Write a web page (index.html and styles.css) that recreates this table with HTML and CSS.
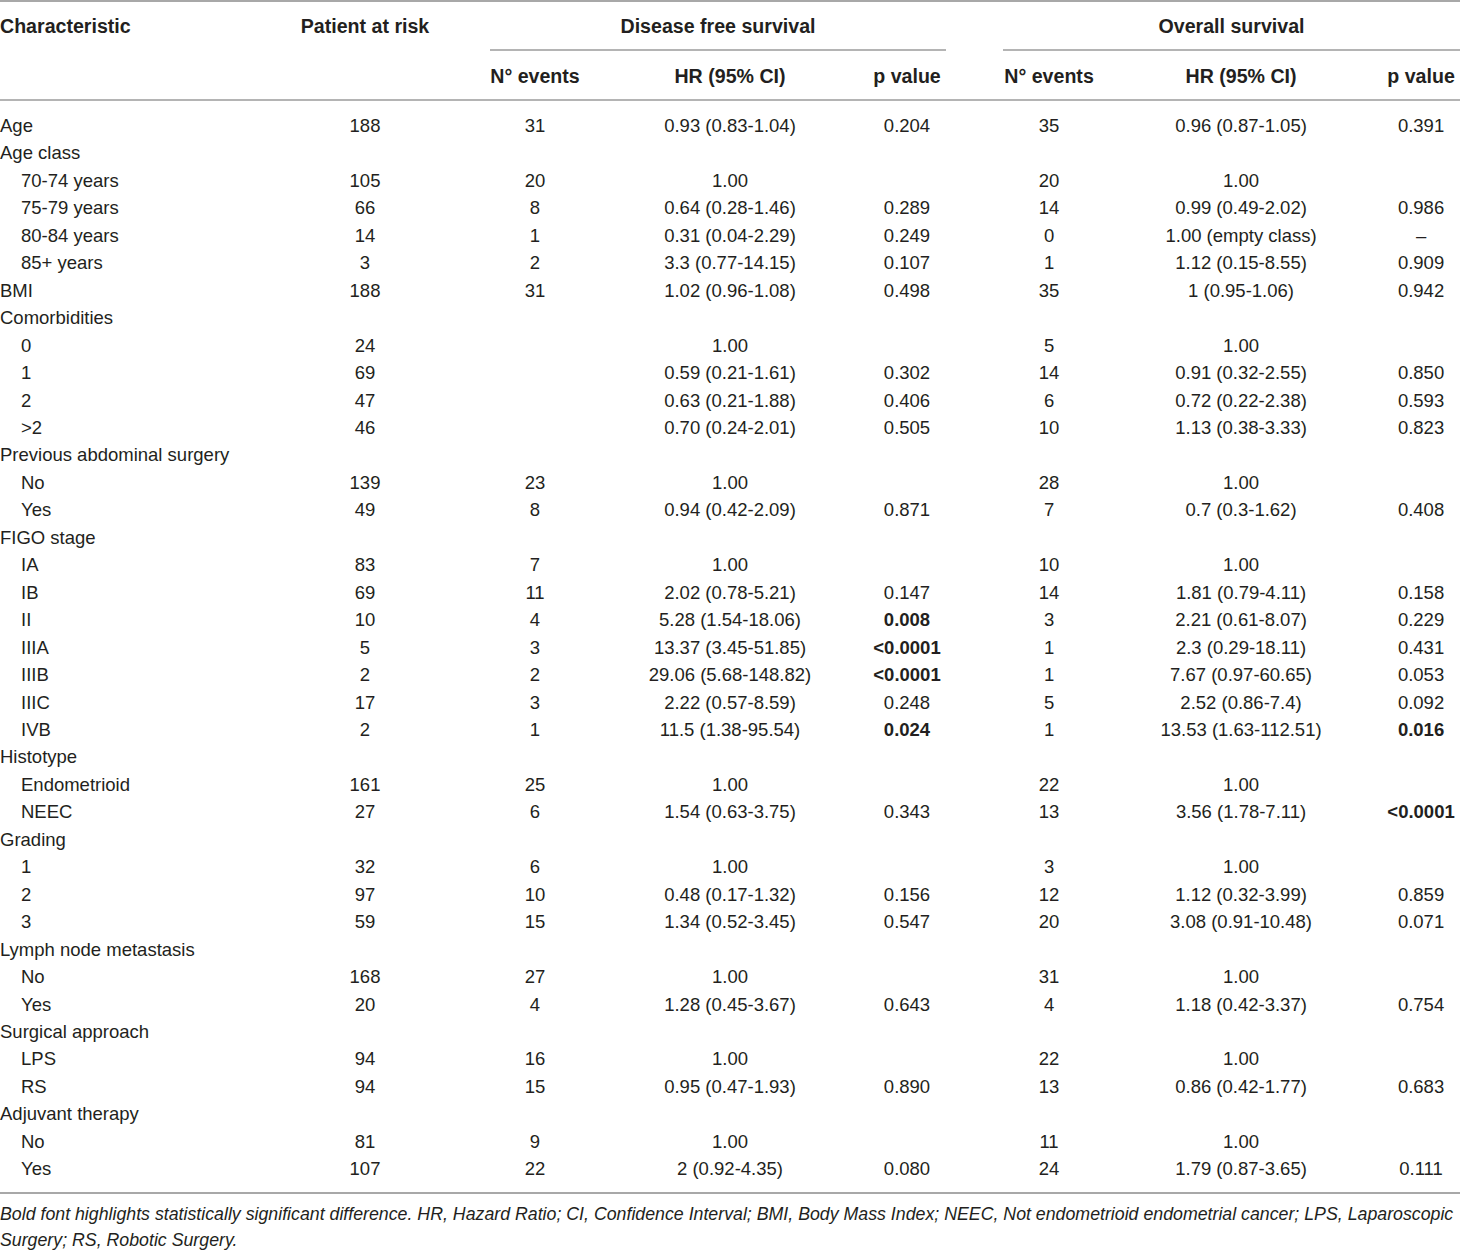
FILE: index.html
```html
<!DOCTYPE html>
<html lang="en">
<head>
<meta charset="utf-8">
<title>Cox regression table</title>
<link rel="stylesheet" href="styles.css">
</head>
<body>
<div class="wrap">
<table class="stats">
<colgroup>
<col class="w1"><col class="w2"><col class="w3"><col class="w4"><col class="w5"><col class="w6"><col class="w7"><col class="w8">
</colgroup>
<thead>
<tr class="h1">
<th class="lab">Characteristic</th>
<th>Patient at risk</th>
<th colspan="3" class="grp"><div class="grp-dfs">Disease free survival</div></th>
<th colspan="3" class="grp"><div class="grp-os">Overall survival</div></th>
</tr>
<tr class="h2">
<th></th>
<th></th>
<th>N° events</th>
<th>HR (95% CI)</th>
<th>p value</th>
<th>N° events</th>
<th>HR (95% CI)</th>
<th>p value</th>
</tr>
</thead>
<tbody>
<tr class="first"><td>Age</td><td>188</td><td>31</td><td>0.93 (0.83-1.04)</td><td>0.204</td><td>35</td><td>0.96 (0.87-1.05)</td><td>0.391</td></tr>
<tr><td>Age class</td><td></td><td></td><td></td><td></td><td></td><td></td><td></td></tr>
<tr><td class="sub">70-74 years</td><td>105</td><td>20</td><td>1.00</td><td></td><td>20</td><td>1.00</td><td></td></tr>
<tr><td class="sub">75-79 years</td><td>66</td><td>8</td><td>0.64 (0.28-1.46)</td><td>0.289</td><td>14</td><td>0.99 (0.49-2.02)</td><td>0.986</td></tr>
<tr><td class="sub">80-84 years</td><td>14</td><td>1</td><td>0.31 (0.04-2.29)</td><td>0.249</td><td>0</td><td>1.00 (empty class)</td><td>–</td></tr>
<tr><td class="sub">85+ years</td><td>3</td><td>2</td><td>3.3 (0.77-14.15)</td><td>0.107</td><td>1</td><td>1.12 (0.15-8.55)</td><td>0.909</td></tr>
<tr><td>BMI</td><td>188</td><td>31</td><td>1.02 (0.96-1.08)</td><td>0.498</td><td>35</td><td>1 (0.95-1.06)</td><td>0.942</td></tr>
<tr><td>Comorbidities</td><td></td><td></td><td></td><td></td><td></td><td></td><td></td></tr>
<tr><td class="sub">0</td><td>24</td><td></td><td>1.00</td><td></td><td>5</td><td>1.00</td><td></td></tr>
<tr><td class="sub">1</td><td>69</td><td></td><td>0.59 (0.21-1.61)</td><td>0.302</td><td>14</td><td>0.91 (0.32-2.55)</td><td>0.850</td></tr>
<tr><td class="sub">2</td><td>47</td><td></td><td>0.63 (0.21-1.88)</td><td>0.406</td><td>6</td><td>0.72 (0.22-2.38)</td><td>0.593</td></tr>
<tr><td class="sub">&gt;2</td><td>46</td><td></td><td>0.70 (0.24-2.01)</td><td>0.505</td><td>10</td><td>1.13 (0.38-3.33)</td><td>0.823</td></tr>
<tr><td>Previous abdominal surgery</td><td></td><td></td><td></td><td></td><td></td><td></td><td></td></tr>
<tr><td class="sub">No</td><td>139</td><td>23</td><td>1.00</td><td></td><td>28</td><td>1.00</td><td></td></tr>
<tr><td class="sub">Yes</td><td>49</td><td>8</td><td>0.94 (0.42-2.09)</td><td>0.871</td><td>7</td><td>0.7 (0.3-1.62)</td><td>0.408</td></tr>
<tr><td>FIGO stage</td><td></td><td></td><td></td><td></td><td></td><td></td><td></td></tr>
<tr><td class="sub">IA</td><td>83</td><td>7</td><td>1.00</td><td></td><td>10</td><td>1.00</td><td></td></tr>
<tr><td class="sub">IB</td><td>69</td><td>11</td><td>2.02 (0.78-5.21)</td><td>0.147</td><td>14</td><td>1.81 (0.79-4.11)</td><td>0.158</td></tr>
<tr><td class="sub">II</td><td>10</td><td>4</td><td>5.28 (1.54-18.06)</td><td class="sig">0.008</td><td>3</td><td>2.21 (0.61-8.07)</td><td>0.229</td></tr>
<tr><td class="sub">IIIA</td><td>5</td><td>3</td><td>13.37 (3.45-51.85)</td><td class="sig">&lt;0.0001</td><td>1</td><td>2.3 (0.29-18.11)</td><td>0.431</td></tr>
<tr><td class="sub">IIIB</td><td>2</td><td>2</td><td>29.06 (5.68-148.82)</td><td class="sig">&lt;0.0001</td><td>1</td><td>7.67 (0.97-60.65)</td><td>0.053</td></tr>
<tr><td class="sub">IIIC</td><td>17</td><td>3</td><td>2.22 (0.57-8.59)</td><td>0.248</td><td>5</td><td>2.52 (0.86-7.4)</td><td>0.092</td></tr>
<tr><td class="sub">IVB</td><td>2</td><td>1</td><td>11.5 (1.38-95.54)</td><td class="sig">0.024</td><td>1</td><td>13.53 (1.63-112.51)</td><td class="sig">0.016</td></tr>
<tr><td>Histotype</td><td></td><td></td><td></td><td></td><td></td><td></td><td></td></tr>
<tr><td class="sub">Endometrioid</td><td>161</td><td>25</td><td>1.00</td><td></td><td>22</td><td>1.00</td><td></td></tr>
<tr><td class="sub">NEEC</td><td>27</td><td>6</td><td>1.54 (0.63-3.75)</td><td>0.343</td><td>13</td><td>3.56 (1.78-7.11)</td><td class="sig">&lt;0.0001</td></tr>
<tr><td>Grading</td><td></td><td></td><td></td><td></td><td></td><td></td><td></td></tr>
<tr><td class="sub">1</td><td>32</td><td>6</td><td>1.00</td><td></td><td>3</td><td>1.00</td><td></td></tr>
<tr><td class="sub">2</td><td>97</td><td>10</td><td>0.48 (0.17-1.32)</td><td>0.156</td><td>12</td><td>1.12 (0.32-3.99)</td><td>0.859</td></tr>
<tr><td class="sub">3</td><td>59</td><td>15</td><td>1.34 (0.52-3.45)</td><td>0.547</td><td>20</td><td>3.08 (0.91-10.48)</td><td>0.071</td></tr>
<tr><td>Lymph node metastasis</td><td></td><td></td><td></td><td></td><td></td><td></td><td></td></tr>
<tr><td class="sub">No</td><td>168</td><td>27</td><td>1.00</td><td></td><td>31</td><td>1.00</td><td></td></tr>
<tr><td class="sub">Yes</td><td>20</td><td>4</td><td>1.28 (0.45-3.67)</td><td>0.643</td><td>4</td><td>1.18 (0.42-3.37)</td><td>0.754</td></tr>
<tr><td>Surgical approach</td><td></td><td></td><td></td><td></td><td></td><td></td><td></td></tr>
<tr><td class="sub">LPS</td><td>94</td><td>16</td><td>1.00</td><td></td><td>22</td><td>1.00</td><td></td></tr>
<tr><td class="sub">RS</td><td>94</td><td>15</td><td>0.95 (0.47-1.93)</td><td>0.890</td><td>13</td><td>0.86 (0.42-1.77)</td><td>0.683</td></tr>
<tr><td>Adjuvant therapy</td><td></td><td></td><td></td><td></td><td></td><td></td><td></td></tr>
<tr><td class="sub">No</td><td>81</td><td>9</td><td>1.00</td><td></td><td>11</td><td>1.00</td><td></td></tr>
<tr class="last"><td class="sub">Yes</td><td>107</td><td>22</td><td>2 (0.92-4.35)</td><td>0.080</td><td>24</td><td>1.79 (0.87-3.65)</td><td>0.111</td></tr>
</tbody>
</table>
<p class="note">Bold font highlights statistically significant difference. HR, Hazard Ratio; CI, Confidence Interval; BMI, Body Mass Index; NEEC, Not endometrioid endometrial cancer; LPS, Laparoscopic Surgery; RS, Robotic Surgery.</p>
</div>
</body>
</html>
```

FILE: styles.css
```css
html, body {
  margin: 0;
  padding: 0;
  background: #ffffff;
}

body {
  font-family: "Liberation Sans", Arial, Helvetica, sans-serif;
  color: #231f20;
}

.wrap {
  width: 1460px;
}

.stats {
  width: 1460px;
  table-layout: fixed;
  border-collapse: collapse;
  border-top: 2px solid #a8a8a8;
  border-bottom: 2px solid #a8a8a8;
}

.w1 { width: 270px; }
.w2 { width: 190px; }
.w3 { width: 150px; }
.w4 { width: 240px; }
.w5 { width: 114px; }
.w6 { width: 170px; }
.w7 { width: 214px; }
.w8 { width: 112px; }

.stats th {
  font-weight: bold;
  font-size: 19.6px;
  padding: 0;
  text-align: center;
  vertical-align: middle;
  white-space: nowrap;
}

.stats th.lab {
  text-align: left;
}

.h1 th {
  height: 49px;
}

.h2 th {
  height: 45px;
  padding-top: 3px;
  border-bottom: 2px solid #b4b4b4;
}

.h1 th.grp {
  vertical-align: top;
}

.grp-dfs,
.grp-os {
  height: 49px;
  line-height: 49px;
  box-sizing: border-box;
  border-bottom: 2px solid #b4b4b4;
}

.grp-dfs {
  margin: 0 18px 0 30px;
}

.grp-os {
  margin: 0 0 0 39px;
}

.stats td {
  font-size: 18.5px;
  height: 27.45px;
  line-height: 27.45px;
  padding: 0;
  text-align: center;
  white-space: nowrap;
}

.stats td:first-child {
  text-align: left;
}

.stats td.sub {
  padding-left: 21px;
}

.stats td:nth-child(8),
.h2 th:nth-child(8) {
  padding-left: 34px;
}

.stats td.sig {
  font-weight: bold;
}

.first td {
  padding-top: 11px;
}

.last td {
  padding-bottom: 9px;
}

.note {
  margin: 7px 0 0 0;
  font-style: italic;
  font-size: 17.75px;
  line-height: 26px;
  color: #231f20;
}
```
